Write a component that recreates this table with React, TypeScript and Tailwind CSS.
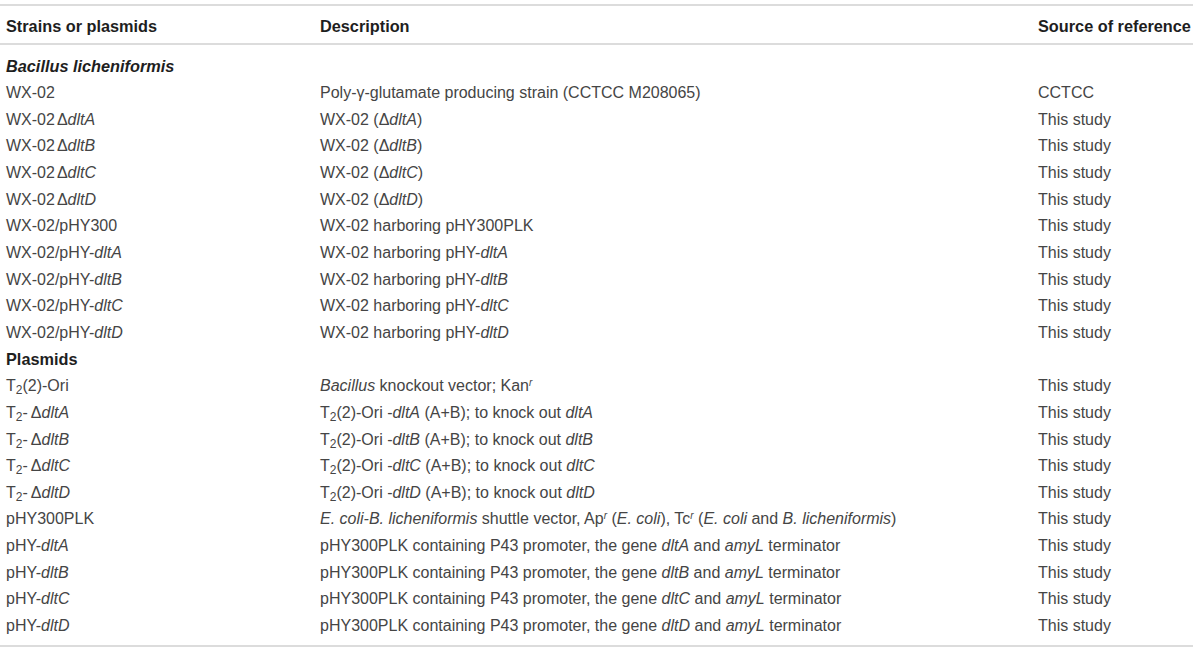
import React from 'react';

type Row = { kind: 'section'; label: string } | { kind: 'row'; name: React.ReactNode; desc: React.ReactNode; source: string };

const I = ({ children }: { children: React.ReactNode }) => <i>{children}</i>;
const Sub = ({ children }: { children: React.ReactNode }) => <sub className="text-[12px]">{children}</sub>;
const Sup = ({ children }: { children: React.ReactNode }) => <sup className="text-[10px] italic">{children}</sup>;
const D = () => <span className="ml-[2px]">Δ</span>;

const desc = (gene: string) => (
    <>
        pHY300PLK containing P43 promoter, the gene <I>{gene}</I> and <I>amyL</I> terminator
    </>
);

const knock = (gene: string) => (
    <>
        T<Sub>2</Sub>(2)-Ori -<I>{gene}</I> (A+B); to knock out <I>{gene}</I>
    </>
);

const rows: Row[] = [
    { kind: 'section', label: 'Bacillus licheniformis' },
    { kind: 'row', name: 'WX-02', desc: 'Poly-γ-glutamate producing strain (CCTCC M208065)', source: 'CCTCC' },
    ...['dltA', 'dltB', 'dltC', 'dltD'].map(
        (g): Row => ({
            kind: 'row',
            name: (
                <>
                    WX-02<D />
                    <I>{g}</I>
                </>
            ),
            desc: (
                <>
                    WX-02 (Δ<I>{g}</I>)
                </>
            ),
            source: 'This study',
        })
    ),
    { kind: 'row', name: 'WX-02/pHY300', desc: 'WX-02 harboring pHY300PLK', source: 'This study' },
    ...['dltA', 'dltB', 'dltC', 'dltD'].map(
        (g): Row => ({
            kind: 'row',
            name: (
                <>
                    WX-02/pHY-<I>{g}</I>
                </>
            ),
            desc: (
                <>
                    WX-02 harboring pHY-<I>{g}</I>
                </>
            ),
            source: 'This study',
        })
    ),
    { kind: 'section', label: 'Plasmids' },
    {
        kind: 'row',
        name: (
            <>
                T<Sub>2</Sub>(2)-Ori
            </>
        ),
        desc: (
            <>
                <I>Bacillus</I> knockout vector; Kan<Sup>r</Sup>
            </>
        ),
        source: 'This study',
    },
    ...['dltA', 'dltB', 'dltC', 'dltD'].map(
        (g): Row => ({
            kind: 'row',
            name: (
                <>
                    T<Sub>2</Sub>-<span className="ml-[3px]">Δ</span>
                    <I>{g}</I>
                </>
            ),
            desc: knock(g),
            source: 'This study',
        })
    ),
    {
        kind: 'row',
        name: 'pHY300PLK',
        desc: (
            <>
                <I>E. coli-B. licheniformis</I> shuttle vector, Ap<Sup>r</Sup> (<I>E. coli</I>), Tc<Sup>r</Sup> (<I>E. coli</I> and <I>B. licheniformis</I>)
            </>
        ),
        source: 'This study',
    },
    ...['dltA', 'dltB', 'dltC', 'dltD'].map(
        (g): Row => ({
            kind: 'row',
            name: (
                <>
                    pHY-<I>{g}</I>
                </>
            ),
            desc: desc(g),
            source: 'This study',
        })
    ),
];

export default function App() {
    return (
        <div className="w-[1200px] h-[653px] bg-white pt-[4px] font-['Liberation_Sans',Arial,sans-serif] text-[16px] text-[#454545]">
            <div className="w-[1193px] border-t-2 border-b-2 border-[#dcdcdc]">
                {/* Header */}
                <div className="grid grid-cols-[314px_718px_1fr] h-[39px] items-center pl-[6px] pt-[3px] border-b-2 border-[#dcdcdc] font-bold text-[16.3px] text-[#1e1e1e]">
                    <div>Strains or plasmids</div>
                    <div>Description</div>
                    <div>Source of reference</div>
                </div>

                {/* Body */}
                <div className="pt-[8px] pb-[6px]">
                    {rows.map((r, idx) =>
                        r.kind === 'section' ? (
                            <div key={idx} className="h-[26.67px] flex items-center pl-[6px] font-bold text-[16.3px] text-[#1e1e1e]">
                                {r.label === 'Plasmids' ? r.label : <i>{r.label}</i>}
                            </div>
                        ) : (
                            <div key={idx} className="grid grid-cols-[314px_718px_1fr] h-[26.67px] items-center pl-[6px] whitespace-nowrap leading-none">
                                <div>{r.name}</div>
                                <div>{r.desc}</div>
                                <div>{r.source}</div>
                            </div>
                        )
                    )}
                </div>
            </div>
        </div>
    );
}
